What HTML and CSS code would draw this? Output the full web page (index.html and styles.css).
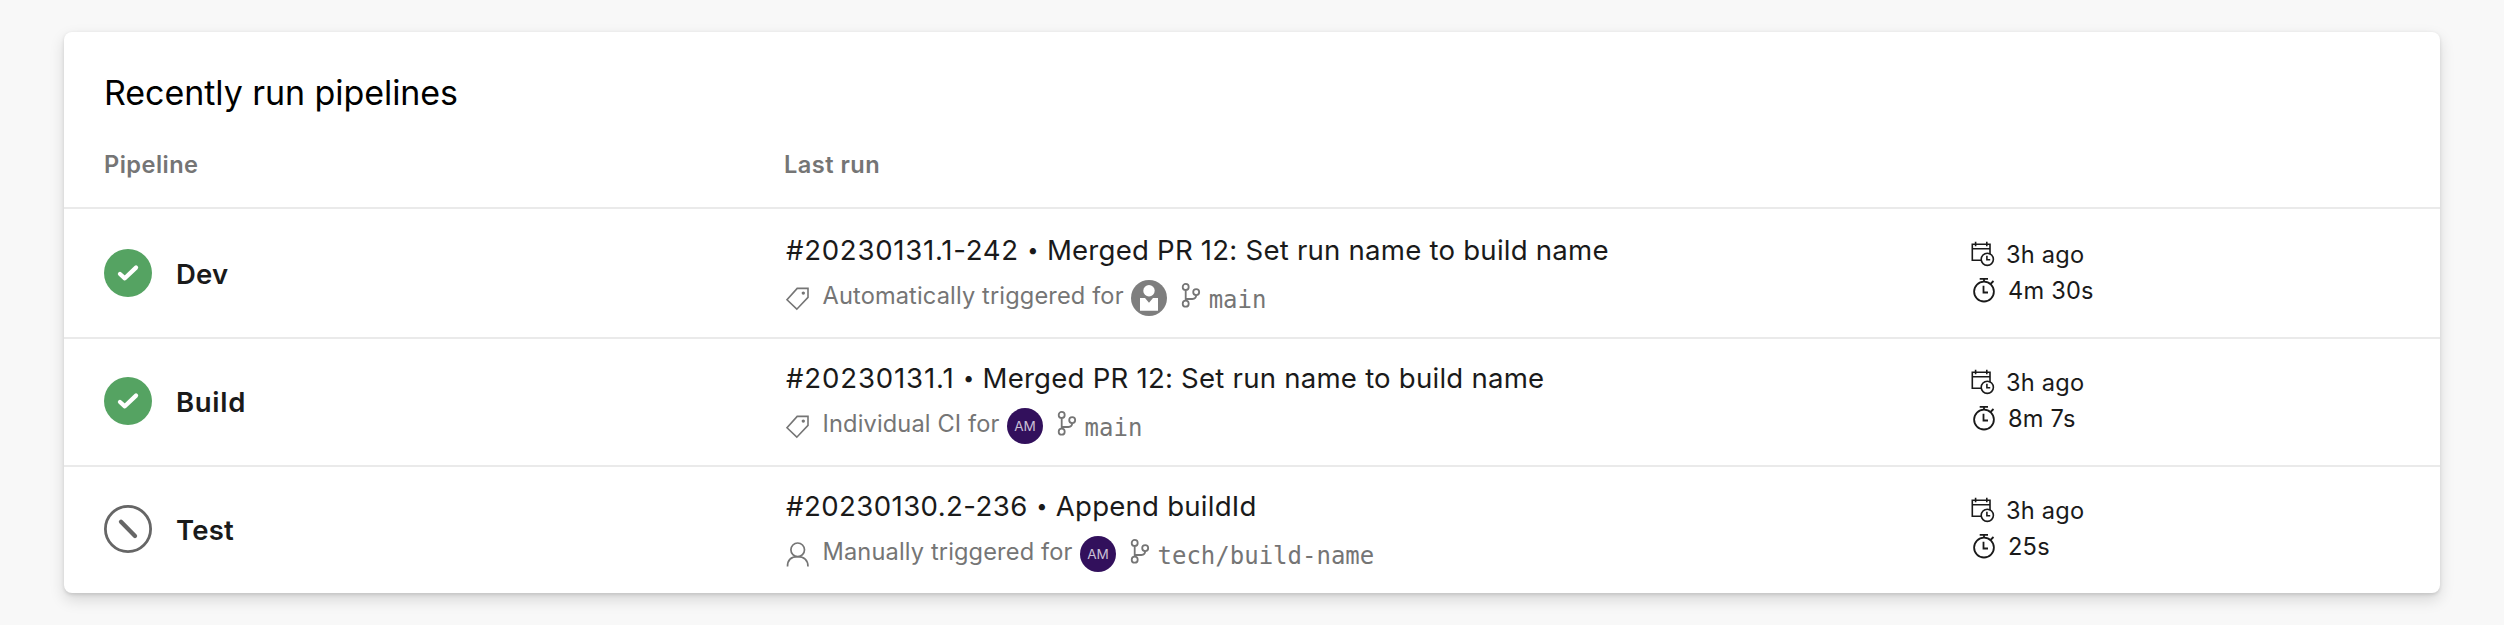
FILE: index.html
```
<!DOCTYPE html>
<html lang="en">
<head>
<meta charset="utf-8">
<title>Pipelines</title>
<link rel="stylesheet" href="styles.css">
</head>
<body>
<svg class="defs" width="0" height="0" aria-hidden="true">
  <symbol id="success" viewBox="0 0 48 48"><circle cx="24" cy="24" r="24" fill="#55a362"/><path d="M16 25l4.8 4.3L32 18.6" fill="none" stroke="#fff" stroke-width="4.3" stroke-linecap="round" stroke-linejoin="round"/></symbol>
  <symbol id="skipped" viewBox="0 0 48 48"><circle cx="24" cy="24" r="22.6" fill="none" stroke="#666" stroke-width="2.8"/><path d="M17 16.8L31 31" stroke="#666" stroke-width="4.3" stroke-linecap="round"/></symbol>
  <symbol id="tag" viewBox="0 0 25 26"><path d="M12.2 3.4H23v9L11.8 24.2 2 14.8z" fill="none" stroke="currentColor" stroke-width="1.6"/><circle cx="18.3" cy="8.1" r="1.7" fill="currentColor"/></symbol>
  <symbol id="person" viewBox="0 0 25 26"><path d="M2.5 25.5C2.5 19 6.5 15.6 12.7 15.6S23 19 23 25.5" fill="none" stroke="currentColor" stroke-width="1.7"/><circle cx="12.7" cy="8.8" r="6.8" fill="#fff" stroke="currentColor" stroke-width="1.7"/></symbol>
  <symbol id="branch" viewBox="0 0 20 26"><g fill="none" stroke="currentColor" stroke-width="1.8"><circle cx="4.7" cy="3.9" r="3"/><circle cx="15.2" cy="9.1" r="3"/><circle cx="4.7" cy="20.7" r="3"/><path d="M4.7 6.9v10.8M15.2 12.1c0 2.7-1.2 3.9-3.8 3.9H4.7"/></g></symbol>
  <symbol id="calendar" viewBox="0 0 25 26"><g fill="none" stroke="currentColor" stroke-width="1.6"><path d="M11 19.3H2.3V3.2H20v10M2.3 7.7H20M5.6.8v4.4M16.8.8v4.4"/><circle cx="17.3" cy="18.3" r="6.1"/><path d="M16.9 14.7v4h3.3"/></g></symbol>
  <symbol id="stopwatch" viewBox="0 0 25 26"><g fill="none" stroke="currentColor" stroke-width="1.8"><circle cx="12" cy="14.6" r="9.9"/><path d="M7.7 1.8H16M12 1.8v3M18.5 7l3-3M11.5 8.8v6.7H16"/></g></symbol>
  <symbol id="user" viewBox="0 0 36 36"><circle cx="18" cy="18" r="18" fill="#7e7e7e"/><circle cx="18" cy="10.7" r="5.7" fill="#fff"/><path d="M9 18h5l4 4.8 4-4.8h5v12.7H9z" fill="#fff"/></symbol>
</svg>

<section class="card">
  <h2 class="title">Recently run pipelines</h2>
  <div class="grid head">
    <div>Pipeline</div>
    <div>Last run</div>
  </div>

  <div class="grid row">
    <div class="pipeline"><svg class="status"><use href="#success"/></svg><span class="name">Dev</span></div>
    <div class="run">
      <div class="summary"><span class="number number-long">#20230131.1-242</span><span class="dot">•</span><span>Merged PR 12: Set run name to build name</span></div>
      <div class="trigger"><svg class="glyph"><use href="#tag"/></svg><span class="reason">Automatically triggered for</span><svg class="avatar"><use href="#user"/></svg><svg class="branch"><use href="#branch"/></svg><span class="ref">main</span></div>
    </div>
    <div class="times">
      <div class="time"><svg class="glyph"><use href="#calendar"/></svg><span>3h ago</span></div>
      <div class="time duration"><svg class="glyph"><use href="#stopwatch"/></svg><span>4m 30s</span></div>
    </div>
  </div>

  <div class="grid row">
    <div class="pipeline"><svg class="status"><use href="#success"/></svg><span class="name name-build">Build</span></div>
    <div class="run">
      <div class="summary"><span class="number number-short">#20230131.1</span><span class="dot">•</span><span>Merged PR 12: Set run name to build name</span></div>
      <div class="trigger"><svg class="glyph"><use href="#tag"/></svg><span class="reason">Individual CI for</span><span class="avatar initials">AM</span><svg class="branch"><use href="#branch"/></svg><span class="ref">main</span></div>
    </div>
    <div class="times">
      <div class="time"><svg class="glyph"><use href="#calendar"/></svg><span>3h ago</span></div>
      <div class="time duration"><svg class="glyph"><use href="#stopwatch"/></svg><span>8m 7s</span></div>
    </div>
  </div>

  <div class="grid row">
    <div class="pipeline"><svg class="status"><use href="#skipped"/></svg><span class="name">Test</span></div>
    <div class="run">
      <div class="summary"><span class="number">#20230130.2-236</span><span class="dot">•</span><span>Append buildId</span></div>
      <div class="trigger"><svg class="glyph"><use href="#person"/></svg><span class="reason">Manually triggered for</span><span class="avatar initials">AM</span><svg class="branch"><use href="#branch"/></svg><span class="ref">tech/build-name</span></div>
    </div>
    <div class="times">
      <div class="time"><svg class="glyph"><use href="#calendar"/></svg><span>3h ago</span></div>
      <div class="time duration"><svg class="glyph"><use href="#stopwatch"/></svg><span>25s</span></div>
    </div>
  </div>
</section>
</body>
</html>
```
FILE: styles.css
```
* { box-sizing: border-box; }

body {
  margin: 0;
  padding: 32px 64px;
  height: 625px;
  overflow: hidden;
  background: #f8f8f8;
  color: #1a1a1a;
  font-family: Inter, "Liberation Sans", sans-serif;
  white-space: nowrap;
}

svg { display: block; flex: none; }
.defs { position: absolute; }

.card {
  height: 561px;
  border-radius: 8px;
  background: #fff;
  box-shadow: 0 6.4px 14.4px rgba(0, 0, 0, .132), 0 1.2px 3.6px rgba(0, 0, 0, .108);
}

.title {
  margin: 0;
  padding: 37px 40px 0;
  font-size: 34px;
  font-weight: 400;
  line-height: 48px;
  letter-spacing: -.06px;
  color: #000;
}

.grid {
  display: grid;
  grid-template-columns: 680px 1186px 1fr;
  padding-left: 40px;
}

.head {
  height: 92px;
  padding-top: 32px;
  border-bottom: 2px solid #eaeaea;
  font-size: 23.6px;
  font-weight: 600;
  line-height: 32px;
  letter-spacing: .46px;
  color: #757575;
}

.row {
  height: 128px;
  border-top: 2px solid transparent;
}
.row + .row { border-top-color: #eaeaea; }

.pipeline {
  display: flex;
  align-items: center;
  gap: 24px;
  padding-bottom: 2px;
}
.status { width: 48px; height: 48px; }
.name {
  padding-top: 1px;
  font-size: 27.5px;
  font-weight: 600;
  line-height: 32px;
  letter-spacing: .2px;
}
.name-build { letter-spacing: .7px; }

.run { padding: 21px 0 0 1px; }
.summary {
  display: flex;
  margin-bottom: 12px;
  padding-left: 1px;
  font-size: 27.6px;
  line-height: 36px;
  letter-spacing: .22px;
}
.number { letter-spacing: .42px; }
.number-long { letter-spacing: .72px; }
.number-short { letter-spacing: .84px; }
.dot {
  width: 28px;
  font-size: 20px;
  letter-spacing: 0;
  text-align: center;
}

.trigger {
  display: flex;
  align-items: center;
  height: 36px;
  color: #757575;
}
.glyph { width: 25px; height: 26px; }
.reason {
  margin: -5px 7.5px 0 12.5px;
  font-size: 23.6px;
  line-height: 36px;
  letter-spacing: .14px;
}
.avatar {
  flex: none;
  width: 36px;
  height: 36px;
}
.initials {
  border-radius: 50%;
  background: #32105c;
  color: #c9bfd6;
  font-size: 13.6px;
  line-height: 36px;
  text-align: center;
}
.branch {
  width: 20px;
  height: 26px;
  margin: -4px 7.5px 0 14px;
}
.ref {
  margin-top: 3px;
  font-family: "DejaVu Sans Mono", monospace;
  font-size: 24px;
  line-height: 36px;
}

.times { padding-top: 25px; }
.time {
  display: flex;
  align-items: center;
  gap: 11px;
  height: 36px;
  font-size: 23.6px;
  line-height: 36px;
  letter-spacing: .2px;
}
.time span { padding-top: 1px; }
.duration { padding-left: 2px; }
```
